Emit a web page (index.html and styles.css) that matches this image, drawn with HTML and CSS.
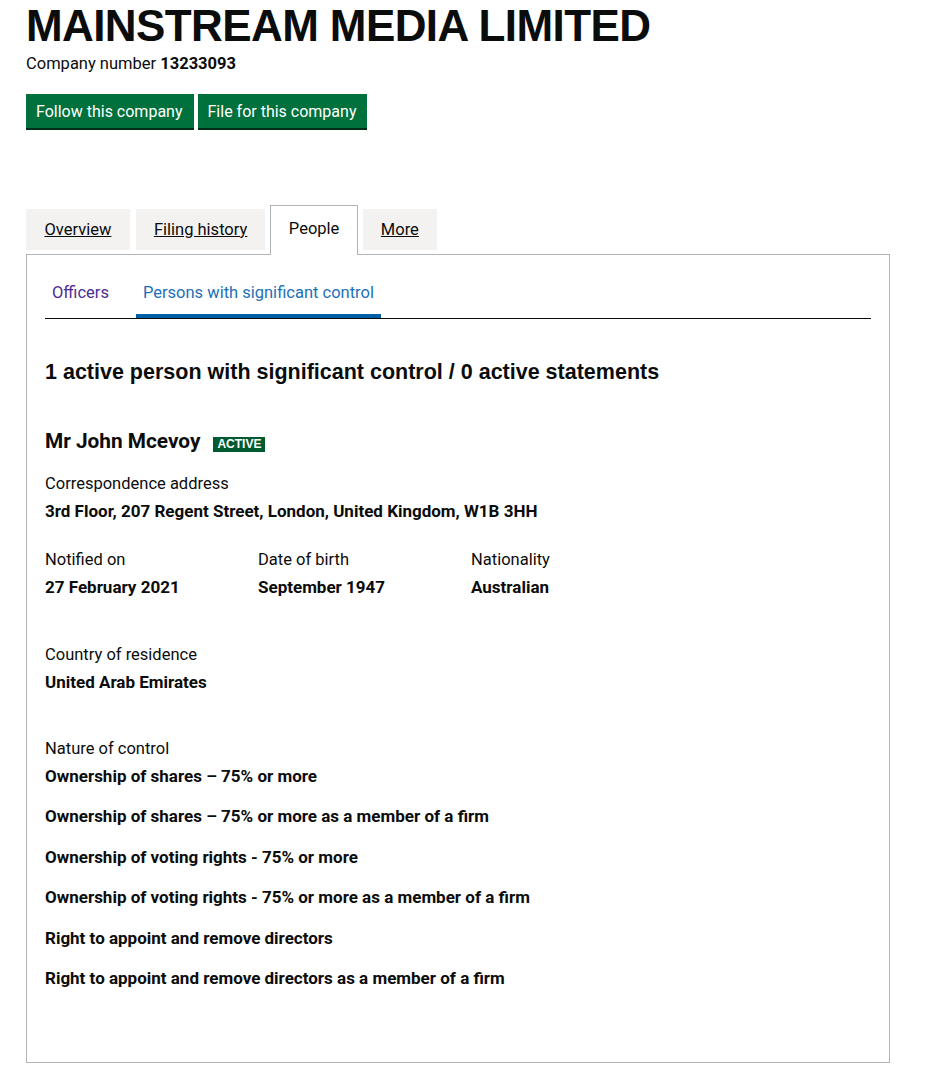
FILE: index.html
```html
<!DOCTYPE html>
<html lang="en">

<head>
    <meta charset="UTF-8" />
    <meta name="viewport" content="width=device-width, initial-scale=1.0" />
    <title>MAINSTREAM MEDIA LIMITED persons with significant control</title>
    <link rel="stylesheet" href="styles.css">
</head>

<body>

    <!-- Company header -->
    <div class="company-header">
        <h1 class="company-name">MAINSTREAM MEDIA LIMITED</h1>
        <p class="company-number">Company number <strong>13233093</strong></p>
        <div class="actions">
            <a class="button" href="#">Follow this company</a>
            <a class="button" href="#">File for this company</a>
        </div>
    </div>

    <!-- Main tabs -->
    <ul class="tabs">
        <li class="tab"><a href="#">Overview</a></li>
        <li class="tab"><a href="#">Filing history</a></li>
        <li class="tab selected"><span>People</span></li>
        <li class="tab"><a href="#">More</a></li>
    </ul>

    <div class="panel">
        <ul class="subtabs">
            <li class="subtab"><a class="visited" href="#">Officers</a></li>
            <li class="subtab active"><a href="#">Persons with significant control</a></li>
        </ul>

        <h2 class="summary">1 active person with significant control / 0 active statements</h2>

        <div class="psc">
            <h3 class="psc-name">Mr John Mcevoy <span class="status">Active</span></h3>

            <dl class="field">
                <dt>Correspondence address</dt>
                <dd>3rd Floor, 207 Regent Street, London, United Kingdom, W1B 3HH</dd>
            </dl>

            <div class="field-row">
                <dl class="field">
                    <dt>Notified on</dt>
                    <dd>27 February 2021</dd>
                </dl>
                <dl class="field">
                    <dt>Date of birth</dt>
                    <dd>September 1947</dd>
                </dl>
                <dl class="field">
                    <dt>Nationality</dt>
                    <dd>Australian</dd>
                </dl>
            </div>

            <dl class="field spaced">
                <dt>Country of residence</dt>
                <dd>United Arab Emirates</dd>
            </dl>

            <dl class="field control">
                <dt>Nature of control</dt>
                <dd>Ownership of shares – 75% or more</dd>
                <dd>Ownership of shares – 75% or more as a member of a firm</dd>
                <dd>Ownership of voting rights - 75% or more</dd>
                <dd>Ownership of voting rights - 75% or more as a member of a firm</dd>
                <dd>Right to appoint and remove directors</dd>
                <dd>Right to appoint and remove directors as a member of a firm</dd>
            </dl>
        </div>
    </div>

</body>

</html>
```

FILE: styles.css
```css
* {
    box-sizing: border-box;
}

body {
    margin: 0;
    padding: 0 47px 0 26px;
    font-family: Roboto, "Liberation Sans", Arial, sans-serif;
    font-size: 16px;
    color: #0b0c0c;
    background-color: #ffffff;
}

.company-name {
    margin: 0;
    padding-top: 4px;
    font-family: "Liberation Sans", Arial, sans-serif;
    font-size: 44px;
    line-height: 44px;
    letter-spacing: -0.6px;
    font-weight: bold;
}

.company-number {
    margin: 6px 0 0;
    font-size: 16.5px;
    line-height: 20px;
}

.actions {
    display: flex;
    gap: 4px;
    margin-top: 20px;
}

.button {
    display: inline-block;
    padding: 7px 11px 6px 10px;
    background-color: #00703c;
    color: #ffffff;
    text-decoration: none;
    line-height: 21px;
    box-shadow: 0 2px 0 #002d18;
}

/* Tabs */
.tabs {
    display: flex;
    align-items: flex-end;
    gap: 5px;
    list-style: none;
    margin: 77px 0 0;
    padding: 0;
}

.tab {
    background-color: #f3f2f1;
    padding: 10px 18px;
    margin-bottom: 4px;
    font-size: 16.5px;
    line-height: 21px;
}

.tab:first-child {
    margin-right: 1px;
    padding: 10px 18.5px;
}

.tab a {
    color: #0b0c0c;
    text-decoration: underline;
}

.tab.selected {
    position: relative;
    background-color: #ffffff;
    border: 1px solid #b1b4b6;
    border-bottom: none;
    padding: 12px 17.5px 16px;
    margin-bottom: -1px;
}

.panel {
    border: 1px solid #b1b4b6;
    padding: 0 18px 74px;
}

/* Sub tabs */
.subtabs {
    display: flex;
    gap: 20px;
    list-style: none;
    margin: 0;
    padding: 0;
    border-bottom: 1px solid #0b0c0c;
}

.subtab {
    padding: 26px 7px 9px;
    font-size: 16.5px;
    line-height: 24px;
    border-bottom: 4px solid transparent;
}

.subtab a {
    color: #1d70b8;
    text-decoration: none;
}

.subtab a.visited {
    color: #4c2c92;
}

.subtab.active {
    border-bottom-color: #005ea5;
}

.summary {
    margin: 41px 0 0;
    font-family: "Liberation Sans", Arial, sans-serif;
    font-size: 21.5px;
    line-height: 25px;
    font-weight: bold;
}

.psc-name {
    display: flex;
    align-items: center;
    gap: 13px;
    margin: 44px 0 0;
    font-size: 20.8px;
    line-height: 25px;
    font-weight: bold;
}

.status {
    display: inline-block;
    background-color: #005a30;
    color: #ffffff;
    font-family: "Liberation Sans", Arial, sans-serif;
    font-size: 12px;
    line-height: 15px;
    padding: 0 4px;
    text-transform: uppercase;
    font-weight: bold;
    margin-top: 6px;
}

.field {
    margin: 20px 0 0;
}

.field dt {
    font-size: 16.5px;
    line-height: 20px;
}

.field dd {
    margin: 7px 0 0;
    font-size: 17px;
    line-height: 20px;
    font-weight: bold;
}

.field-row {
    display: flex;
    margin-top: 29px;
}

.field-row .field {
    width: 213px;
    margin: 0;
}

.spaced {
    margin-top: 48px;
}

.control {
    margin-top: 47px;
}

.control dd + dd {
    margin-top: 20.4px;
}
```
